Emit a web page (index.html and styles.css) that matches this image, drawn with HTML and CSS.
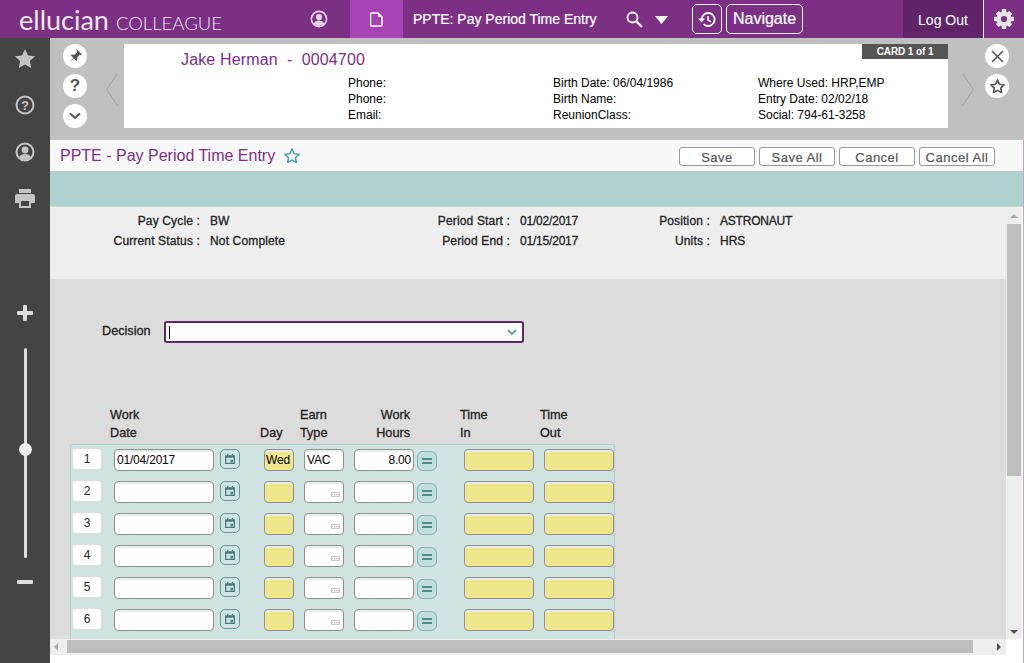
FILE: index.html
```html
<!DOCTYPE html>
<html lang="en">
<head>
<meta charset="UTF-8" />
<title>PPTE - Pay Period Time Entry</title>
<link rel="stylesheet" href="styles.css">
</head>
<body>

<svg class="defs" width="0" height="0">
  <symbol id="ico-cal" viewBox="0 0 12 12"><path fill="#47807a" fill-rule="evenodd" d="M1 1.500h1.500v-1.500h1.500v1.500h4v-1.500h1.500v1.500h1.500a1 1 0 0 1 1 1v8.500a1 1 0 0 1-1 1h-10a1 1 0 0 1-1-1v-8.500a1 1 0 0 1 1-1zM1.500 4.500v6h9v-6zM6.500 7h3v3h-3z"/></symbol>
</svg>

<header class="topbar">
  <div class="logo"><span class="logo-main">ellucian</span><span class="logo-sub">COLLEAGUE</span></div>
  <div class="top-user">
    <svg width="18" height="18" viewBox="0 0 18 18"><circle cx="9" cy="9" r="7.600" fill="none" stroke="#e6d3ea" stroke-width="1.600"/><circle cx="9" cy="7" r="3.100" fill="#e6d3ea"/><path d="M3.600 14c1-2.600 3-3.400 5.400-3.400s4.400.8 5.400 3.400c-1.400 1.400-3.200 2.200-5.400 2.200s-4-.8-5.400-2.200z" fill="#e6d3ea"/></svg>
  </div>
  <div class="top-tab">
    <svg width="13" height="15" viewBox="0 0 13 15"><path d="M1.500 1h6.500l4 4v8a1 1 0 0 1-1 1h-9.500a1 1 0 0 1-1-1v-11a1 1 0 0 1 1-1z" fill="none" stroke="#fff" stroke-width="1.500"/><path d="M8 1v4h4z" fill="#fff"/></svg>
  </div>
  <div class="top-title">PPTE: Pay Period Time Entry</div>
  <svg class="top-search" width="17" height="17" viewBox="0 0 17 17"><circle cx="6.500" cy="6.500" r="5" fill="none" stroke="#fff" stroke-width="1.800"/><path d="M10.200 10.200l5.800 5.800" stroke="#fff" stroke-width="2.200"/></svg>
  <svg class="top-caret" width="13" height="8" viewBox="0 0 13 8"><path d="M0 0h13l-6.500 8z" fill="#fff"/></svg>
  <div class="top-btn top-history">
    <svg width="18" height="17" viewBox="0 0 18 17"><path d="M3.600 8.500a6.500 6.500 0 1 1 2 4.700" fill="none" stroke="#fff" stroke-width="1.800"/><path d="M0 7.500h7l-3.500 4z" fill="#fff"/><path d="M10 5v4l3 1.800" fill="none" stroke="#fff" stroke-width="1.500"/></svg>
  </div>
  <div class="top-btn top-nav">Navigate</div>
  <div class="top-logout">Log Out</div>
  <div class="top-gear">
    <svg width="20" height="20" viewBox="0 0 20 20" fill="#e4e4e4">
      <circle cx="10" cy="10" r="5.300" fill="none" stroke="#e4e4e4" stroke-width="4.400"/>
      <rect x="7.800" y="0" width="4.400" height="4" rx=".6"/>
      <rect x="7.800" y="16" width="4.400" height="4" rx=".6"/>
      <rect x="0" y="7.800" width="4" height="4.400" rx=".6"/>
      <rect x="16" y="7.800" width="4" height="4.400" rx=".6"/>
      <rect x="7.800" y="0.500" width="4.400" height="4" rx=".6" transform="rotate(45 10 10)"/>
      <rect x="7.800" y="0.500" width="4.400" height="4" rx=".6" transform="rotate(135 10 10)"/>
      <rect x="7.800" y="0.500" width="4.400" height="4" rx=".6" transform="rotate(225 10 10)"/>
      <rect x="7.800" y="0.500" width="4.400" height="4" rx=".6" transform="rotate(315 10 10)"/>
    </svg>
  </div>
</header>

<div class="layout">
  <aside class="sidebar">
    <svg class="side-icon" width="20" height="19" viewBox="0 0 20 19"><path d="M10 0l3 6.400 7 .9-5.100 4.800 1.300 6.900-6.200-3.400-6.200 3.400 1.300-6.900-5.100-4.800 7-.9z" fill="#c4c4c4"/></svg>
    <svg class="side-icon" width="20" height="20" viewBox="0 0 20 20"><circle cx="10" cy="10" r="8.500" fill="none" stroke="#c4c4c4" stroke-width="2"/><text x="10" y="14.500" text-anchor="middle" class="side-q">?</text></svg>
    <svg class="side-icon" width="20" height="20" viewBox="0 0 20 20"><circle cx="10" cy="10" r="8.500" fill="none" stroke="#c4c4c4" stroke-width="2"/><circle cx="10" cy="8" r="3.400" fill="#c4c4c4"/><path d="M4 15.500c1-2.700 3.300-3.500 6-3.500s5 .8 6 3.500c-1.500 1.500-3.600 2.500-6 2.500s-4.500-1-6-2.500z" fill="#c4c4c4"/></svg>
    <svg class="side-icon" width="20" height="19" viewBox="0 0 20 19"><path fill="#c4c4c4" fill-rule="evenodd" d="M4 0h12v4h-12zM2 5h16a2 2 0 0 1 2 2v7h-4v5h-12v-5h-4v-7a2 2 0 0 1 2-2zM6 12v5h8v-5z"/></svg>
    <div class="zoom-plus"></div>
    <div class="zoom-track"><span class="zoom-knob"></span></div>
    <div class="zoom-minus"></div>
  </aside>

  <main class="content">
    <section class="person">
      <div class="round-col round-left">
        <div class="round">
          <svg width="14" height="14" viewBox="0 0 14 14"><path d="M8.500 0l5.500 5.500-1.300.7-.9-.4-2.600 2.600.2 2.600-1 1-2.500-2.500-4.400 3.900 3.900-4.400-2.500-2.500 1-1 2.600.2 2.600-2.600-.4-.9z" fill="#555"/></svg>
        </div>
        <div class="round"><span class="round-q">?</span></div>
        <div class="round">
          <svg width="12" height="8" viewBox="0 0 12 8"><path d="M1 1.500l5 4.500 5-4.500" fill="none" stroke="#555" stroke-width="2"/></svg>
        </div>
      </div>
      <svg class="chev" width="12" height="33" viewBox="0 0 12 33"><path d="M11.500 .5l-11 16 11 16" fill="none" stroke="#a0a0a0"/></svg>
      <div class="card">
        <div class="card-badge">CARD 1 of 1</div>
        <div class="card-name">Jake Herman &nbsp;-&nbsp; 0004700</div>
        <div class="card-grid">
          <div>Phone:</div><div>Birth Date: 06/04/1986</div><div>Where Used: HRP,EMP</div>
          <div>Phone:</div><div>Birth Name:</div><div>Entry Date: 02/02/18</div>
          <div>Email:</div><div>ReunionClass:</div><div>Social: 794-61-3258</div>
        </div>
      </div>
      <svg class="chev" width="12" height="33" viewBox="0 0 12 33"><path d="M.5 .5l11 16-11 16" fill="none" stroke="#a0a0a0"/></svg>
      <div class="round-col round-right">
        <div class="round">
          <svg width="13" height="13" viewBox="0 0 13 13"><path d="M1 1l11 11M12 1l-11 11" stroke="#555" stroke-width="1.600"/></svg>
        </div>
        <div class="round">
          <svg width="15" height="14" viewBox="0 0 20 19"><path d="M10 1.500l2.700 5.700 6.200.8-4.500 4.300 1.100 6.100-5.500-3-5.500 3 1.100-6.100-4.500-4.300 6.200-.8z" fill="none" stroke="#555" stroke-width="2.200"/></svg>
        </div>
      </div>
    </section>

    <section class="titlebar">
      <h1>PPTE - Pay Period Time Entry</h1>
      <svg class="title-star" width="16" height="15" viewBox="0 0 20 19"><path d="M10 1.500l2.700 5.700 6.200.8-4.500 4.300 1.100 6.100-5.500-3-5.500 3 1.100-6.100-4.500-4.300 6.200-.8z" fill="none" stroke="#3f9aa8" stroke-width="1.800"/></svg>
      <div class="actions">
        <button>Save</button>
        <button>Save All</button>
        <button>Cancel</button>
        <button>Cancel All</button>
      </div>
    </section>

    <div class="teal-bar"></div>

    <div class="work">
      <div class="work-main">
        <section class="summary">
          <div class="lbl">Pay Cycle :</div><div>BW</div>
          <div class="lbl">Period Start :</div><div class="date">01/02/2017</div>
          <div class="lbl">Position :</div><div class="date">ASTRONAUT</div>
          <div class="lbl">Current Status :</div><div class="wide">Not Complete</div>
          <div class="lbl">Period End :</div><div class="date">01/15/2017</div>
          <div class="lbl">Units :</div><div>HRS</div>
        </section>

        <section class="form">
          <div class="decision">
            <label>Decision</label>
            <div class="decision-box">
              <span class="text-caret"></span>
              <svg width="10" height="6" viewBox="0 0 10 6"><path d="M1 1l4 4 4-4" fill="none" stroke="#3d8f80" stroke-width="1.600"/></svg>
            </div>
          </div>

          <div class="grid-head">
            <div class="h-date">Work<br>Date</div>
            <div class="h-day"><br>Day</div>
            <div class="h-earn">Earn<br>Type</div>
            <div class="h-hours">Work<br>Hours</div>
            <div class="h-in">Time<br>In</div>
            <div class="h-out">Time<br>Out</div>
          </div>

          <div class="rows">
            <div class="row">
              <div class="num">1</div>
              <input class="f-date" value="01/04/2017">
              <div class="cal"><svg width="10" height="10"><use href="#ico-cal"/></svg></div>
              <input class="f-day yellow" value="Wed">
              <input class="f-earn" value="VAC">
              <input class="f-hours" value="8.00">
              <div class="eq"><span></span><span></span></div>
              <input class="f-time yellow">
              <input class="f-time yellow">
            </div>
            <div class="row">
              <div class="num">2</div>
              <input class="f-date">
              <div class="cal"><svg width="10" height="10"><use href="#ico-cal"/></svg></div>
              <input class="f-day yellow">
              <div class="f-earn lookup"><i></i></div>
              <input class="f-hours">
              <div class="eq"><span></span><span></span></div>
              <input class="f-time yellow">
              <input class="f-time yellow">
            </div>
            <div class="row">
              <div class="num">3</div>
              <input class="f-date">
              <div class="cal"><svg width="10" height="10"><use href="#ico-cal"/></svg></div>
              <input class="f-day yellow">
              <div class="f-earn lookup"><i></i></div>
              <input class="f-hours">
              <div class="eq"><span></span><span></span></div>
              <input class="f-time yellow">
              <input class="f-time yellow">
            </div>
            <div class="row">
              <div class="num">4</div>
              <input class="f-date">
              <div class="cal"><svg width="10" height="10"><use href="#ico-cal"/></svg></div>
              <input class="f-day yellow">
              <div class="f-earn lookup"><i></i></div>
              <input class="f-hours">
              <div class="eq"><span></span><span></span></div>
              <input class="f-time yellow">
              <input class="f-time yellow">
            </div>
            <div class="row">
              <div class="num">5</div>
              <input class="f-date">
              <div class="cal"><svg width="10" height="10"><use href="#ico-cal"/></svg></div>
              <input class="f-day yellow">
              <div class="f-earn lookup"><i></i></div>
              <input class="f-hours">
              <div class="eq"><span></span><span></span></div>
              <input class="f-time yellow">
              <input class="f-time yellow">
            </div>
            <div class="row">
              <div class="num">6</div>
              <input class="f-date">
              <div class="cal"><svg width="10" height="10"><use href="#ico-cal"/></svg></div>
              <input class="f-day yellow">
              <div class="f-earn lookup"><i></i></div>
              <input class="f-hours">
              <div class="eq"><span></span><span></span></div>
              <input class="f-time yellow">
              <input class="f-time yellow">
            </div>
          </div>
        </section>
      </div>

      <div class="vscroll">
        <span class="arrow-up"></span>
        <div class="vthumb"></div>
        <span class="arrow-down"></span>
      </div>
    </div>

    <div class="hscroll">
      <span class="arrow-left"></span>
      <div class="hthumb"></div>
      <span class="arrow-right"></span>
    </div>
  </main>
</div>

</body>
</html>
```

FILE: styles.css
```css
* {
  box-sizing: border-box;
}
html, body {
  height: 100%;
}
body {
  margin: 0;
  overflow: hidden;
  background: #fff;
  font-family: "Liberation Sans", Arial, sans-serif;
  font-size: 12px;
  color: #000;
}
.defs {
  display: block;
  height: 0;
}

/* Top bar */
.topbar {
  display: flex;
  align-items: center;
  height: 38px;
  background: #7b3083;
  color: #fff;
}
.logo {
  display: flex;
  align-items: baseline;
  width: 298px;
  padding-left: 19px;
  font-family: Lato, sans-serif;
  color: #f1e6f3;
}
.logo-main {
  font-size: 27px;
  line-height: 37px;
}
.logo-sub {
  font-size: 18.500px;
  font-weight: 300;
  margin-left: 7px;
}
.top-user {
  display: flex;
  justify-content: center;
  width: 42px;
}
.top-tab {
  display: flex;
  align-items: center;
  justify-content: center;
  width: 53px;
  height: 38px;
  margin-left: 10px;
  background: #a843b6;
}
.top-title {
  width: 223px;
  padding-left: 10px;
  font-size: 14px;
  -webkit-text-stroke: .2px #fff;
}
.top-search {
  margin-right: 12px;
}
.top-caret {
  margin-top: 1px;
  margin-right: 24px;
}
.top-btn {
  display: flex;
  align-items: center;
  justify-content: center;
  height: 30px;
  border: 1px solid #fff;
  border-radius: 5px;
}
.top-history {
  width: 30px;
  margin-right: 4px;
}
.top-nav {
  width: 77px;
  font-size: 16px;
  -webkit-text-stroke: .2px #fff;
}
.top-logout {
  display: flex;
  align-items: center;
  justify-content: center;
  width: 80px;
  height: 38px;
  margin-left: 100px;
  background: #5f2568;
  font-size: 14px;
  padding-top: 2px;
}
.top-gear {
  display: flex;
  align-items: center;
  justify-content: center;
  width: 41px;
  height: 38px;
  border-left: 1px solid #fff;
}

.layout {
  display: flex;
  height: 625px;
}

/* Left rail */
.sidebar {
  display: flex;
  flex-direction: column;
  align-items: center;
  width: 50px;
  padding-top: 11px;
  background: #444;
}
.side-icon {
  margin-bottom: 27px;
}
.side-q {
  font-family: "Liberation Sans", sans-serif;
  font-size: 13px;
  font-weight: bold;
  fill: #c4c4c4;
}
.zoom-plus, .zoom-minus {
  position: relative;
  width: 16px;
  height: 4px;
  background: #ddd;
  border-radius: 1px;
}
.zoom-plus {
  margin-top: 76px;
}
.zoom-plus::after {
  content: "";
  position: absolute;
  left: 6px;
  top: -6px;
  width: 4px;
  height: 16px;
  background: #ddd;
  border-radius: 1px;
}
.zoom-track {
  position: relative;
  width: 3px;
  height: 210px;
  margin-top: 33px;
  background: #ddd;
  border-radius: 2px;
}
.zoom-knob {
  position: absolute;
  left: -5px;
  top: 95px;
  width: 13px;
  height: 13px;
  background: #eee;
  border-radius: 50%;
}
.zoom-minus {
  margin-top: 22px;
}

.content {
  display: flex;
  flex-direction: column;
  width: 974px;
  border-right: 1px solid #c99fd6;
  height: 625px;
}

/* Person card */
.person {
  display: flex;
  flex: none;
  height: 102px;
  margin-right: -1px;
  padding-top: 6px;
  background: #c0c0c0;
}
.round-col {
  display: flex;
  flex-direction: column;
  gap: 6px;
}
.round-left {
  margin-left: 13px;
}
.round-right {
  margin-left: 11px;
}
.round {
  display: flex;
  align-items: center;
  justify-content: center;
  width: 24px;
  height: 24px;
  background: #fff;
  border-radius: 50%;
}
.round-q {
  font-size: 17px;
  font-weight: bold;
  color: #555;
}
.chev {
  margin: 29px 0 0 19px;
}
.card + .chev {
  margin-left: 14px;
}
.card {
  position: relative;
  width: 824px;
  height: 84px;
  margin-left: 6px;
  background: #fff;
}
.card-badge {
  position: absolute;
  top: 0;
  right: 0;
  width: 86px;
  height: 15px;
  background: #555;
  color: #fff;
  font-size: 10px;
  font-weight: bold;
  letter-spacing: -.1px;
  line-height: 15px;
  text-align: center;
}
.card-name {
  height: 31px;
  padding: 7px 0 0 57px;
  font-size: 16px;
  letter-spacing: .15px;
  color: #7b3083;
}
.card-grid {
  display: grid;
  grid-template-columns: repeat(3, 205px);
  grid-auto-rows: 16px;
  padding-left: 224px;
  line-height: 16px;
}

/* Title and actions */
.titlebar {
  display: flex;
  flex: none;
  align-items: center;
  height: 32px;
  padding: 0 28px 0 10px;
  background: #f8f8f8;
  border-bottom: 1px solid #ccc;
}
.titlebar h1 {
  margin: 0;
  font-size: 16px;
  font-weight: normal;
  color: #7b3083;
}
.title-star {
  margin-left: 9px;
}
.actions {
  display: flex;
  gap: 4px;
  margin-left: auto;
  padding-top: 2px;
}
.actions button {
  width: 76px;
  height: 19px;
  padding: 1px 0 0;
  background: #fff;
  border: 1px solid #999;
  border-radius: 3px;
  font-family: inherit;
  font-size: 13px;
  letter-spacing: .5px;
  color: #555;
  -webkit-text-stroke: .2px #555;
}

.teal-bar {
  flex: none;
  height: 35px;
  background: #aed2ce;
  border-bottom: 1px solid #c8dcd9;
}

.work {
  display: flex;
  flex: none;
  height: 432px;
}
.work-main {
  width: 956px;
  overflow: hidden;
}

/* Summary block */
.summary {
  display: grid;
  grid-template-columns: 150px 140px 150px 120px 60px auto;
  grid-auto-rows: 20px;
  column-gap: 10px;
  align-content: start;
  height: 72px;
  padding-top: 4px;
  background: #eee;
  color: #222;
  line-height: 20px;
  -webkit-text-stroke: .3px #222;
}
.lbl {
  text-align: right;
  letter-spacing: .15px;
}
.date {
  letter-spacing: -.2px;
}
.wide {
  letter-spacing: .15px;
}

/* Form */
.form {
  height: 360px;
  overflow: hidden;
  padding-top: 42px;
  background: #dcdcdc;
  color: #222;
}
.decision {
  display: flex;
  align-items: center;
  padding-left: 52px;
}
.decision label {
  width: 62px;
  font-size: 12.670px;
  -webkit-text-stroke: .3px #222;
  padding-bottom: 2px;
}
.decision-box {
  display: flex;
  align-items: center;
  justify-content: space-between;
  width: 360px;
  height: 22px;
  padding: 0 5px 0 3px;
  background: #fff;
  border: 2px solid #5f2568;
  border-radius: 3px;
}
.text-caret {
  width: 1px;
  height: 13px;
  background: #000;
}
.grid-head {
  position: relative;
  display: flex;
  height: 36px;
  margin-top: 63px;
  font-size: 12.670px;
  line-height: 18px;
  -webkit-text-stroke: .3px #222;
}
.h-date {
  margin-left: 60px;
  width: 150px;
}
.h-day {
  width: 40px;
}
.h-earn {
  width: 60px;
}
.h-hours {
  width: 50px;
  text-align: right;
}
.h-in {
  margin-left: 50px;
  width: 80px;
}

/* Rows */
.rows {
  width: 545px;
  margin: 2px 0 0 20px;
  padding-top: 3px;
  background: #cfe4e1;
  border: 1px solid #aed2ce;
  border-radius: 2px 2px 0 0;
}
.row {
  display: flex;
  align-items: flex-start;
  height: 32px;
  padding-left: 1px;
}
.row input, .lookup {
  height: 22px;
  padding: 0 2px;
  background: #fff;
  border: 1px solid #8f8f8f;
  border-radius: 4px;
  box-shadow: inset 0 2px 0 #eee;
  font-family: inherit;
  font-size: 12px;
  letter-spacing: -.2px;
  color: #000;
  outline: none;
}
.num {
  width: 30px;
  height: 22px;
  background: #fff;
  border: 1px solid #ddd;
  border-radius: 4px;
  color: #222;
  font-size: 12px;
  line-height: 20px;
  text-align: center;
}
.row .f-date {
  width: 100px;
  margin: 1px 0 0 12px;
}
.cal {
  display: flex;
  align-items: center;
  justify-content: center;
  width: 20px;
  height: 20px;
  margin: 1px 0 0 6px;
  background: #cfe4e1;
  border: 1px solid #5d9c92;
  border-radius: 5px;
}
.row .f-day {
  width: 30px;
  margin: 1px 0 0 24px;
  padding: 0 1px;
}
.row .f-earn {
  position: relative;
  width: 40px;
  margin: 1px 0 0 10px;
}
.lookup i {
  position: absolute;
  right: 3px;
  top: 10px;
  width: 9px;
  height: 5px;
  border: 1px solid #ccc;
  background: repeating-linear-gradient(90deg, #aaa 0 1px, transparent 1px 2px) center / 100% 1px no-repeat;
}
.row .f-hours {
  width: 60px;
  margin: 1px 0 0 10px;
  text-align: right;
}
.eq {
  display: flex;
  flex-direction: column;
  align-items: center;
  justify-content: center;
  gap: 2px;
  width: 20px;
  height: 20px;
  margin: 3px 0 0 3px;
  background: #c3dddA;
  border: 1px solid #7fb5ac;
  border-radius: 6px;
}
.eq span {
  width: 10px;
  height: 2px;
  background: #4f8f85;
}
.row .f-time {
  width: 70px;
  margin: 1px 0 0 10px;
}
.eq + .f-time {
  margin-left: 27px;
}
.row input.yellow {
  background: #f0e68c;
}

/* Scrollbars */
.vscroll {
  position: relative;
  width: 16px;
  background: #eee;
}
.vthumb {
  position: absolute;
  top: 17px;
  left: 1px;
  width: 14px;
  height: 252px;
  background: #bdbdbd;
}
.hscroll {
  position: relative;
  flex: none;
  width: 956px;
  height: 16px;
  background: #eee;
}
.hthumb {
  position: absolute;
  top: 1px;
  left: 17px;
  width: 906px;
  height: 13px;
  background: #bdbdbd;
}
.arrow-up, .arrow-down, .arrow-left, .arrow-right {
  position: absolute;
  width: 0;
  height: 0;
  border: 4px solid transparent;
}
.arrow-up {
  top: 3px;
  left: 4px;
  border-bottom-color: #aaa;
}
.arrow-down {
  bottom: 1px;
  left: 4px;
  border-top-color: #555;
}
.arrow-left {
  top: 4px;
  left: 0;
  border-right-color: #aaa;
}
.arrow-right {
  top: 4px;
  right: 1px;
  border-left-color: #555;
}
```
